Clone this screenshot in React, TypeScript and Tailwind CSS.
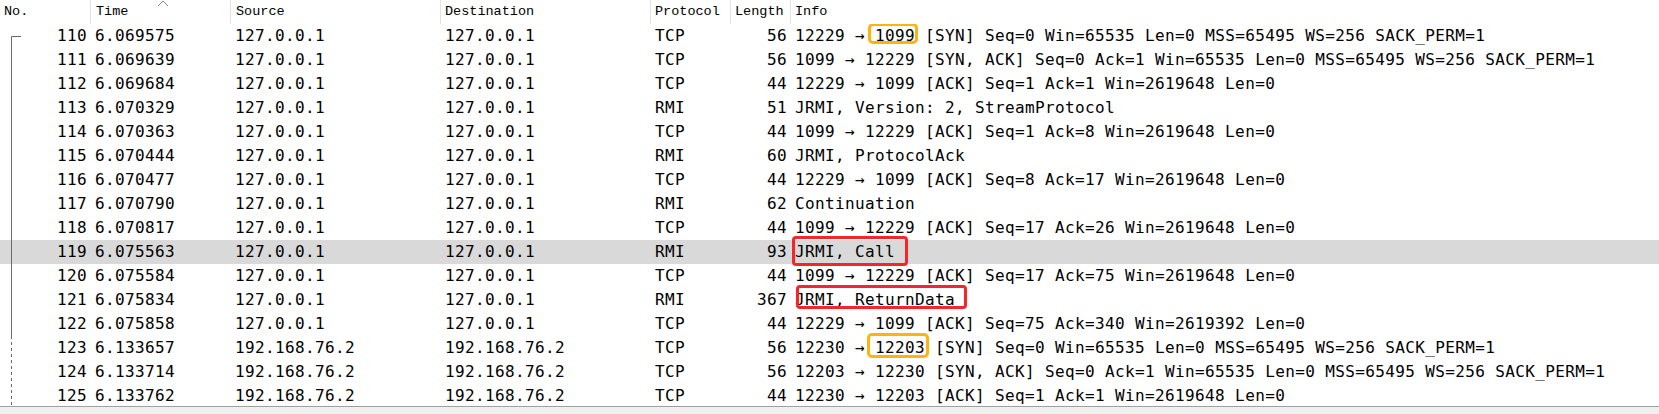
import React from 'react';

type Mark = { color: 'orange' | 'red'; top: number; bottom: number; left: number; right: number };

interface Packet {
  no: number;
  time: string;
  src: string;
  dst: string;
  proto: string;
  len: number;
  pre?: string;
  mark?: string;
  post?: string;
  box?: Mark;
  tree: 'start' | 'solid' | 'dashed';
  selected?: boolean;
}

const packets: Packet[] = [
  { no: 110, time: '6.069575', src: '127.0.0.1', dst: '127.0.0.1', proto: 'TCP', len: 56, pre: '12229 → ', mark: '1099', post: ' [SYN] Seq=0 Win=65535 Len=0 MSS=65495 WS=256 SACK_PERM=1', box: { color: 'orange', top: -1, bottom: 4, left: -7, right: -3 }, tree: 'start' },
  { no: 111, time: '6.069639', src: '127.0.0.1', dst: '127.0.0.1', proto: 'TCP', len: 56, pre: '1099 → 12229 [SYN, ACK] Seq=0 Ack=1 Win=65535 Len=0 MSS=65495 WS=256 SACK_PERM=1', tree: 'solid' },
  { no: 112, time: '6.069684', src: '127.0.0.1', dst: '127.0.0.1', proto: 'TCP', len: 44, pre: '12229 → 1099 [ACK] Seq=1 Ack=1 Win=2619648 Len=0', tree: 'solid' },
  { no: 113, time: '6.070329', src: '127.0.0.1', dst: '127.0.0.1', proto: 'RMI', len: 51, pre: 'JRMI, Version: 2, StreamProtocol', tree: 'solid' },
  { no: 114, time: '6.070363', src: '127.0.0.1', dst: '127.0.0.1', proto: 'TCP', len: 44, pre: '1099 → 12229 [ACK] Seq=1 Ack=8 Win=2619648 Len=0', tree: 'solid' },
  { no: 115, time: '6.070444', src: '127.0.0.1', dst: '127.0.0.1', proto: 'RMI', len: 60, pre: 'JRMI, ProtocolAck', tree: 'solid' },
  { no: 116, time: '6.070477', src: '127.0.0.1', dst: '127.0.0.1', proto: 'TCP', len: 44, pre: '12229 → 1099 [ACK] Seq=8 Ack=17 Win=2619648 Len=0', tree: 'solid' },
  { no: 117, time: '6.070790', src: '127.0.0.1', dst: '127.0.0.1', proto: 'RMI', len: 62, pre: 'Continuation', tree: 'solid' },
  { no: 118, time: '6.070817', src: '127.0.0.1', dst: '127.0.0.1', proto: 'TCP', len: 44, pre: '1099 → 12229 [ACK] Seq=17 Ack=26 Win=2619648 Len=0', tree: 'solid' },
  { no: 119, time: '6.075563', src: '127.0.0.1', dst: '127.0.0.1', proto: 'RMI', len: 93, mark: 'JRMI, Call', box: { color: 'red', top: -4, bottom: -2, left: -3, right: -13 }, tree: 'solid', selected: true },
  { no: 120, time: '6.075584', src: '127.0.0.1', dst: '127.0.0.1', proto: 'TCP', len: 44, pre: '1099 → 12229 [ACK] Seq=17 Ack=75 Win=2619648 Len=0', tree: 'solid' },
  { no: 121, time: '6.075834', src: '127.0.0.1', dst: '127.0.0.1', proto: 'RMI', len: 367, mark: 'JRMI, ReturnData', box: { color: 'red', top: -3, bottom: 3, left: 1, right: -12 }, tree: 'solid' },
  { no: 122, time: '6.075858', src: '127.0.0.1', dst: '127.0.0.1', proto: 'TCP', len: 44, pre: '12229 → 1099 [ACK] Seq=75 Ack=340 Win=2619392 Len=0', tree: 'solid' },
  { no: 123, time: '6.133657', src: '192.168.76.2', dst: '192.168.76.2', proto: 'TCP', len: 56, pre: '12230 → ', mark: '12203', post: ' [SYN] Seq=0 Win=65535 Len=0 MSS=65495 WS=256 SACK_PERM=1', box: { color: 'orange', top: -3, bottom: 2, left: -8, right: -4 }, tree: 'dashed' },
  { no: 124, time: '6.133714', src: '192.168.76.2', dst: '192.168.76.2', proto: 'TCP', len: 56, pre: '12203 → 12230 [SYN, ACK] Seq=0 Ack=1 Win=65535 Len=0 MSS=65495 WS=256 SACK_PERM=1', tree: 'dashed' },
  { no: 125, time: '6.133762', src: '192.168.76.2', dst: '192.168.76.2', proto: 'TCP', len: 44, pre: '12230 → 12203 [ACK] Seq=1 Ack=1 Win=2619648 Len=0', tree: 'dashed' },
];

const cols = 'grid grid-cols-[90px_140px_210px_210px_80px_60px_1fr]';

const TreeMark: React.FC<{ kind: Packet['tree'] }> = ({ kind }) => (
  <svg width="24" height="24" className="shrink-0">
    {kind === 'start' && (
      <>
        <line x1="11.5" y1="12.5" x2="21" y2="12.5" stroke="#6a6a6a" />
        <line x1="11.5" y1="12.5" x2="11.5" y2="24" stroke="#6a6a6a" />
      </>
    )}
    {kind === 'solid' && <line x1="11.5" y1="0" x2="11.5" y2="24" stroke="#6a6a6a" />}
    {kind === 'dashed' && (
      <line x1="11.5" y1="0" x2="11.5" y2="24" stroke="#6a6a6a" strokeDasharray="3 3" />
    )}
  </svg>
);

const Boxed: React.FC<{ text: string; box: Mark }> = ({ text, box }) => (
  <span className="relative inline-block">
    {text}
    <span
      className={`absolute border-[3px] ${
        box.color === 'orange' ? 'rounded-[5px] border-[#ffb30f]' : 'rounded-[4px] border-[#f5262b]'
      }`}
      style={{ top: box.top, bottom: box.bottom, left: box.left, right: box.right }}
    />
  </span>
);

const Header: React.FC = () => (
  <div className={`${cols} h-[24px] bg-white text-[13.5px] text-black font-['Liberation_Mono',monospace] leading-[24px]`}>
    <div className="pl-[4px]">No.</div>
    <div className="relative border-l border-[#e3e3e3] pl-[5px]">
      Time
      <svg width="12" height="7" viewBox="0 0 12 7" className="absolute left-[66px] top-0">
        <path d="M1 6 L6 1 L11 6" fill="none" stroke="#8a8a8a" strokeWidth="1" />
      </svg>
    </div>
    <div className="border-l border-[#e3e3e3] pl-[5px]">Source</div>
    <div className="border-l border-[#e3e3e3] pl-[4px]">Destination</div>
    <div className="border-l border-[#e3e3e3] pl-[4px]">Protocol</div>
    <div className="border-l border-[#e3e3e3] pl-[4px]">Length</div>
    <div className="border-l border-[#e3e3e3] pl-[4px]">Info</div>
  </div>
);

const Row: React.FC<{ p: Packet }> = ({ p }) => (
  <div className={`${cols} h-[24px] leading-[24px] ${p.selected ? 'bg-[#d9d9d9]' : 'bg-white'}`}>
    <div className="flex items-center pr-[3px]">
      <TreeMark kind={p.tree} />
      <span className="flex-1 text-right">{p.no}</span>
    </div>
    <div className="pl-[5px]">{p.time}</div>
    <div className="pl-[5px]">{p.src}</div>
    <div className="pl-[5px]">{p.dst}</div>
    <div className="pl-[5px]">{p.proto}</div>
    <div className="pr-[3px] text-right">{p.len}</div>
    <div className="whitespace-pre pl-[5px]">
      {p.pre}
      {p.mark && p.box && <Boxed text={p.mark} box={p.box} />}
      {p.post}
    </div>
  </div>
);

export default function App() {
  return (
    <div className="flex h-[414px] w-[1659px] flex-col overflow-hidden bg-white">
      <Header />
      <div className="h-[382px] overflow-hidden font-['DejaVu_Sans_Mono',monospace] text-[16px] tracking-[0.37px] text-black">
        {packets.map((p) => (
          <Row key={p.no} p={p} />
        ))}
      </div>
      <div className="h-[8px] border-t border-[#a0a0a0] bg-[#f0f0f0]" />
    </div>
  );
}
